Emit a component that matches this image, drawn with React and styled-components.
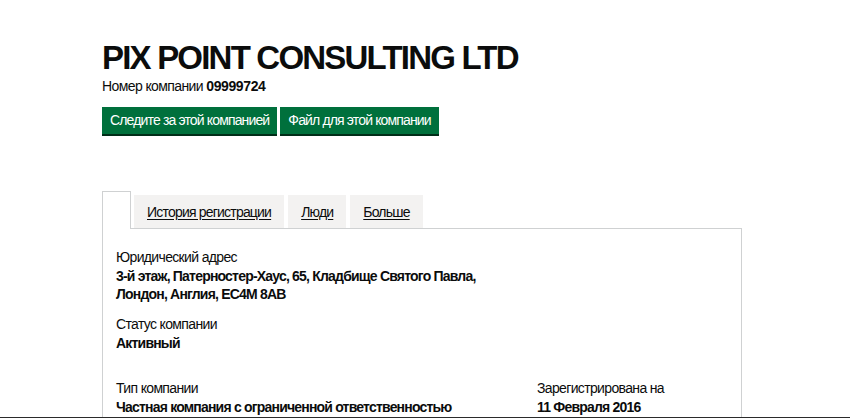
import React from 'react';
import styled, { createGlobalStyle } from 'styled-components';

const GlobalStyle = createGlobalStyle`
  body {
    margin: 0;
    background: #fff;
    color: #0b0c0c;
    font-family: "Liberation Sans", Arial, sans-serif;
  }
`;

const Page = styled.main`
  padding: 38px 0 40px 102px;
  width: 640px;
`;

const Title = styled.h1`
  margin: 0;
  font-size: 33px;
  line-height: 40px;
  font-weight: 700;
  letter-spacing: -1.8px;
`;

const Number = styled.p`
  margin: -1px 0 0;
  font-size: 14px;
  line-height: 18px;
  letter-spacing: -0.6px;
  b { font-weight: 700; letter-spacing: -0.4px; }
`;

const Actions = styled.div`
  display: flex;
  gap: 3px;
  margin-top: 12px;
`;

const Button = styled.a`
  display: inline-block;
  background: #00703c;
  color: #fff;
  font-size: 14px;
  line-height: 18px;
  padding: 4px 8px 5px;
  box-shadow: 0 2px 0 #002d18;
  letter-spacing: -0.85px;
  text-decoration: none;
`;

const TabList = styled.ul`
  list-style: none;
  display: flex;
  align-items: flex-end;
  gap: 4px;
  margin: 57px 0 0;
  padding: 0;
  border-bottom: 1px solid #cfd1d2;
`;

const Tab = styled.li`
  height: ${p => (p.$active ? '38px' : '33px')};
  margin-bottom: ${p => (p.$active ? '-1px' : '0')};
  margin-right: ${p => (p.$active ? '-1px' : '0')};
  box-sizing: border-box;
  background: ${p => (p.$active ? '#fff' : '#f3f2f1')};
  border: ${p => (p.$active ? '1px solid #cfd1d2' : 'none')};
  border-bottom: none;
  width: ${p => (p.$active ? '29px' : 'auto')};
  padding: ${p => (p.$active ? '0' : '0 13px')};
  display: flex;
  align-items: center;
  font-size: 14px;
  letter-spacing: -0.8px;
  a {
    color: #0b0c0c;
    text-decoration: underline;
    text-underline-offset: 2px;
  }
`;

const Panel = styled.section`
  border: 1px solid #cfd1d2;
  border-top: none;
  padding: 19px 13px 20px;
  display: grid;
  grid-template-columns: 421px 1fr;
  row-gap: 12px;
`;

const Field = styled.div`
  grid-column: ${p => (p.$wide ? '1 / -1' : 'auto')};
  margin-top: ${p => p.$space || 0};
`;

const Label = styled.div`
  font-size: 14px;
  line-height: 18px;
  letter-spacing: -0.65px;
  color: #0b0c0c;
`;

const Value = styled.div`
  margin-top: 1px;
  font-size: 14px;
  line-height: 18px;
  font-weight: 700;
  letter-spacing: -0.8px;
`;

const BottomEdge = styled.div`
  position: fixed;
  left: 0;
  right: 0;
  bottom: 0;
  height: 1px;
  background: #2b2b2b;
`;

export default function App() {
  return (
    <>
      <GlobalStyle />
      <Page>
        <Title>PIX POINT CONSULTING LTD</Title>
        <Number>Номер компании <b>09999724</b></Number>
        <Actions>
          <Button href="#">Следите за этой компанией</Button>
          <Button href="#">Файл для этой компании</Button>
        </Actions>

        <TabList>
          <Tab $active />
          <Tab><a href="#">История регистрации</a></Tab>
          <Tab><a href="#">Люди</a></Tab>
          <Tab><a href="#">Больше</a></Tab>
        </TabList>
        <Panel>
          <Field $wide>
            <Label>Юридический адрес</Label>
            <Value>3-й этаж, Патерностер-Хаус, 65, Кладбище Святого Павла,<br />Лондон, Англия, EC4M 8AB</Value>
          </Field>
          <Field $wide>
            <Label>Статус компании</Label>
            <Value>Активный</Value>
          </Field>
          <Field $space="15px">
            <Label>Тип компании</Label>
            <Value>Частная компания с ограниченной ответственностью</Value>
          </Field>
          <Field $space="15px">
            <Label>Зарегистрирована на</Label>
            <Value>11 Февраля 2016</Value>
          </Field>
        </Panel>
      </Page>
      <BottomEdge />
    </>
  );
}
